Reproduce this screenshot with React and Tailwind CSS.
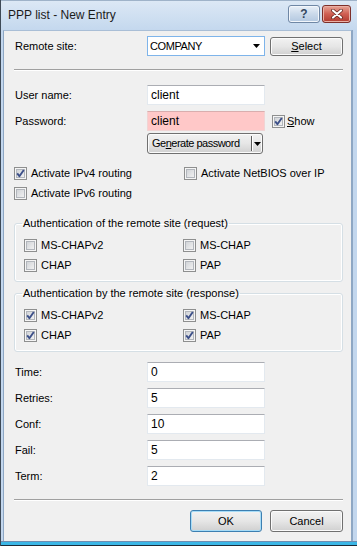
import React from 'react';

const CheckBox = ({ checked }) => (
  <svg width="13" height="13" viewBox="0 0 13 13" className="shrink-0">
    <defs>
      <linearGradient id="cbFill" x1="0" y1="0" x2="1" y2="1">
        <stop offset="0" stopColor="#cfd2d6" />
        <stop offset="1" stopColor="#f3f3f3" />
      </linearGradient>
    </defs>
    <rect x="0.5" y="0.5" width="12" height="12" fill="#f5f5f5" stroke="#8e8f8f" />
    <rect x="2.5" y="2.5" width="8" height="8" fill="url(#cbFill)" stroke="#b2b6bc" />
    {checked && (
      <path d="M3.2 6.4 L5.4 9.2 L9.8 3" fill="none" stroke="#3d5089" strokeWidth="1.9" strokeLinejoin="round" />
    )}
  </svg>
);

const TextBox = ({ value, pink }) => (
  <div
    className={`w-[118px] h-[20px] flex items-center px-[3px] border border-[#e3e9ef] border-t-[#abadb3] text-[12px] text-black ${
      pink ? 'bg-[#ffc8c8] border-[#f0d4d4] border-t-[#d9aeae]' : 'bg-white'
    }`}
  >
    {value}
  </div>
);

const Button = ({ children, def, className = '' }) => (
  <div
    className={`flex items-center justify-center rounded-[3px] border bg-linear-to-b from-[#f2f2f2] via-[#e6e6e6] to-[#d0d0d0] ${
      def
        ? 'border-[#3c7fb1] shadow-[inset_0_0_0_1px_#a7dcf7]'
        : 'border-[#707070] shadow-[inset_0_0_0_1px_#fbfbfb]'
    } ${className}`}
  >
    {children}
  </div>
);

const Check = ({ checked, children, className = '' }) => (
  <div className={`flex items-center gap-[4px] h-[16px] ${className}`}>
    <CheckBox checked={checked} />
    <span>{children}</span>
  </div>
);

const Separator = ({ className = '' }) => (
  <div className={`h-[2px] border-t border-[#a0a0a0] border-b-white border-b ${className}`} />
);

const Group = ({ title, items, className = '' }) => (
  <fieldset className={`border border-[#d5dfe5] rounded-[3px] pl-[9px] pb-[8px] shadow-[inset_0_0_0_1px_#ffffff] ${className}`}>
    <legend className="ml-[-2px] px-[1px] leading-[14px]">{title}</legend>
    <div className="grid grid-cols-[159px_1fr] gap-y-[4px] mt-[7px]">
      {items.map(([label, checked]) => (
        <Check key={label} checked={checked}>{label}</Check>
      ))}
    </div>
  </fieldset>
);

const FieldRow = ({ label, value, className = '' }) => (
  <div className={`flex items-center h-[20px] ${className}`}>
    <div className="w-[133px] pl-[1px]">{label}</div>
    <TextBox value={value} />
  </div>
);

export default function App() {
  return (
    <div className="w-[357px] h-[546px] flex flex-col bg-[#c3d7ee] border-l border-[#3e4a57] font-['Liberation_Sans',Arial,sans-serif] text-[11px] leading-[13px] text-black">
      {/* title bar */}
      <div className="h-[30px] shrink-0 flex items-start pl-[7px] pr-[6px] bg-linear-to-b from-[#dce8f5] to-[#c4d8ee] border-t border-[#9fb3c9]">
        <div className="mt-[7px] text-[12px] leading-[15px] text-[#1b1b1b] flex-1">PPP list - New Entry</div>
        <div className="mt-[4px] flex gap-[2px]">
          <div className="w-[32px] h-[18px] rounded-[3px] border border-[#6f87a5] bg-linear-to-b from-[#e9f0f8] via-[#cad9ea] to-[#b3c8e0] shadow-[inset_0_0_0_1px_#f2f6fb] flex items-center justify-center text-[12px] font-bold text-[#33475f]">
            ?
          </div>
          <div className="w-[29px] h-[18px] rounded-[3px] border border-[#7d2f2a] bg-linear-to-b from-[#e6a497] via-[#cf5e52] to-[#b13b30] shadow-[inset_0_0_0_1px_#eab0a5] flex items-center justify-center">
            <svg width="12" height="10" viewBox="0 0 12 10">
              <path d="M2 1.5 L10 8.5 M10 1.5 L2 8.5" stroke="#5a1f1a" strokeWidth="3.6" strokeLinecap="round" />
              <path d="M2 1.5 L10 8.5 M10 1.5 L2 8.5" stroke="#ffffff" strokeWidth="2.2" strokeLinecap="round" />
            </svg>
          </div>
        </div>
      </div>

      {/* client area */}
      <div className="flex-1 flex">
        <div className="ml-[2px] w-[349px] h-[511px] bg-[#f0f0f0] border-x border-t border-[#8ea7c4] border-t-[#a9bed6] pl-[10px] pr-[8px] pt-[5px] flex flex-col">
          <div className="flex items-center h-[20px]">
            <div className="w-[133px] pl-[1px]">Remote site:</div>
            <div className="w-[118px] h-[20px] bg-white border border-[#7eb4ea] flex items-center justify-between pl-[2px] pr-[4px]">
              <span className="tracking-[-0.4px]">COMPANY</span>
              <svg width="7" height="4" viewBox="0 0 7 4">
                <path d="M0 0 H7 L3.5 4 Z" fill="#000" />
              </svg>
            </div>
            <Button className="ml-[5px] w-[73px] h-[19px]">
              <span><u>S</u>elect</span>
            </Button>
          </div>

          <Separator className="mt-[13px]" />

          <FieldRow label="User name:" value="client" className="mt-[14px]" />
          <div className="flex items-center h-[20px] mt-[6px]">
            <div className="w-[133px] pl-[1px]">Password:</div>
            <TextBox value="client" pink />
            <div className="ml-[7px] flex items-center gap-[2px]">
              <CheckBox checked />
              <span><u>S</u>how</span>
            </div>
          </div>
          <div className="flex mt-[2px]">
            <div className="w-[133px]" />
            <Button className="w-[116px] h-[21px] !justify-start">
              <span className="w-[103px] pl-[4px] tracking-[-0.5px]">Ge<u>n</u>erate password</span>
              <span className="w-[2px] h-[15px] border-l border-[#5b5b5b] border-r border-r-white" />
              <span className="flex-1 flex justify-center">
                <svg width="7" height="4" viewBox="0 0 7 4">
                  <path d="M0 0 H7 L3.5 4 Z" fill="#000" />
                </svg>
              </span>
            </Button>
          </div>

          <div className="flex mt-[11px]">
            <Check checked className="w-[170px]">Activate IPv4 routing</Check>
            <Check>Activate NetBIOS over IP</Check>
          </div>
          <Check className="mt-[4px]">Activate IPv6 routing</Check>

          <Group
            className="mt-[15px]"
            title="Authentication of the remote site (request)"
            items={[['MS-CHAPv2', false], ['MS-CHAP', false], ['CHAP', false], ['PAP', false]]}
          />
          <Group
            className="mt-[4px]"
            title="Authentication by the remote site (response)"
            items={[['MS-CHAPv2', true], ['MS-CHAP', true], ['CHAP', true], ['PAP', true]]}
          />

          <FieldRow label="Time:" value="0" className="mt-[10px]" />
          <FieldRow label="Retries:" value="5" className="mt-[6px]" />
          <FieldRow label="Conf:" value="10" className="mt-[6px]" />
          <FieldRow label="Fail:" value="5" className="mt-[6px]" />
          <FieldRow label="Term:" value="2" className="mt-[6px]" />

          <Separator className="mt-[13px]" />

          <div className="flex justify-end gap-[8px] mt-[9px]">
            <Button def className="w-[72px] h-[22px]">OK</Button>
            <Button className="w-[73px] h-[22px]">Cancel</Button>
          </div>
        </div>
        <div className="w-[5px] border-l border-[#8ea7c4]" />
      </div>
      <div className="h-[5px] shrink-0 border-t border-[#6f8db0] bg-[#3bb6e6] border-b border-b-[#1c2b38]" />
    </div>
  );
}
